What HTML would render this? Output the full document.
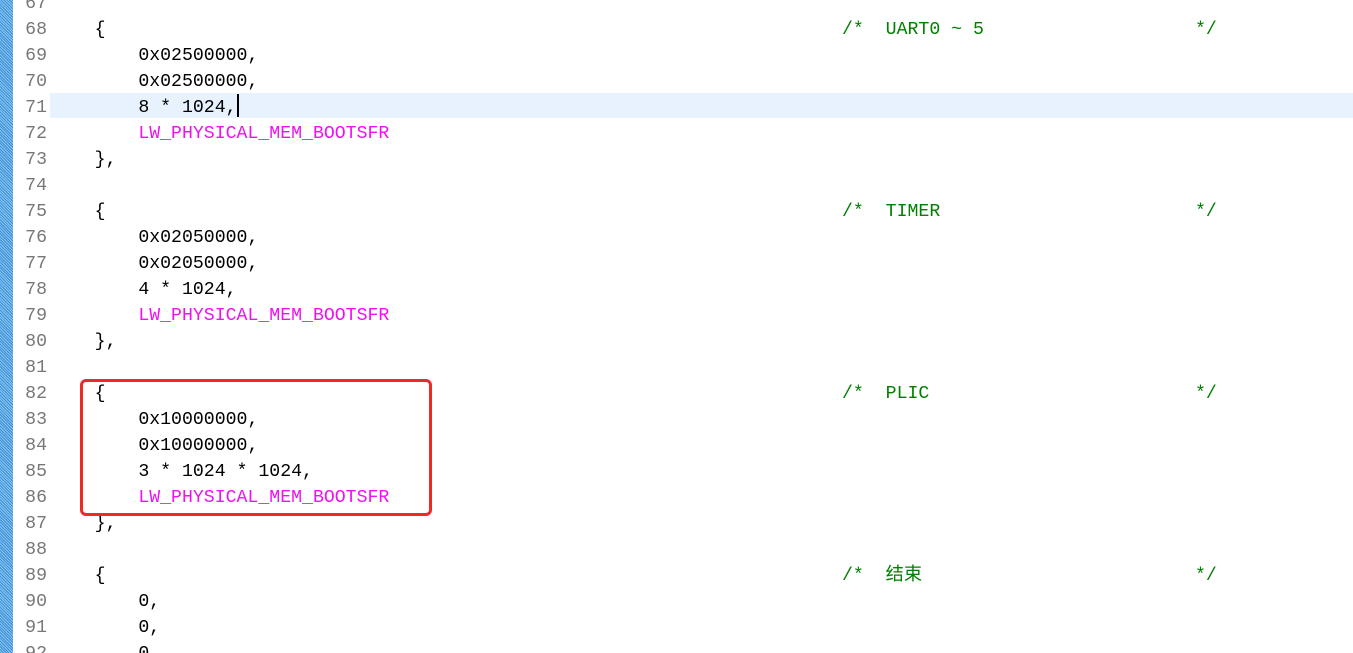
<!DOCTYPE html>
<html><head><meta charset="utf-8"><style>
html,body{margin:0;width:1353px;height:653px;overflow:hidden;}
body{background:#fff;position:relative;font-family:"Liberation Mono","Noto Sans CJK SC",monospace;font-size:18.2px;}
.bar{position:absolute;left:0;top:0;width:13px;height:653px;background:repeating-linear-gradient(45deg,#3a8fd8 0 1px,#8cc4f0 1px 2px);}
.hl{position:absolute;left:50px;top:93px;width:1303px;height:25px;background:#e8f2fe;}
.wrap{position:absolute;left:0;top:2px;width:1353px;height:653px;}
.ln{position:absolute;left:0;width:47px;text-align:right;color:#787878;height:26px;line-height:26px;}
.c{position:absolute;left:51px;white-space:pre;height:26px;line-height:26px;color:#000;}
.cm{position:absolute;white-space:pre;color:#008000;height:26px;line-height:26px;}
.m{color:#f010f0;}
.box{position:absolute;left:80px;top:379px;width:346px;height:131px;border:3px solid #f02a22;border-radius:6px;}
.cur{position:absolute;left:237px;top:94px;width:2px;height:23px;background:#000;}
</style></head><body>
<div class="bar"></div>
<div class="hl"></div>
<div class="wrap">
<div class="ln" style="top:-11px">67</div><div class="ln" style="top:15px">68</div><div class="ln" style="top:41px">69</div><div class="ln" style="top:67px">70</div><div class="ln" style="top:93px">71</div><div class="ln" style="top:119px">72</div><div class="ln" style="top:145px">73</div><div class="ln" style="top:171px">74</div><div class="ln" style="top:197px">75</div><div class="ln" style="top:223px">76</div><div class="ln" style="top:249px">77</div><div class="ln" style="top:275px">78</div><div class="ln" style="top:301px">79</div><div class="ln" style="top:327px">80</div><div class="ln" style="top:353px">81</div><div class="ln" style="top:379px">82</div><div class="ln" style="top:405px">83</div><div class="ln" style="top:431px">84</div><div class="ln" style="top:457px">85</div><div class="ln" style="top:483px">86</div><div class="ln" style="top:509px">87</div><div class="ln" style="top:535px">88</div><div class="ln" style="top:561px">89</div><div class="ln" style="top:587px">90</div><div class="ln" style="top:613px">91</div><div class="ln" style="top:639px">92</div>

<div class="c" style="top:15px">    {</div>
<div class="c" style="top:41px">        0x02500000,</div>
<div class="c" style="top:67px">        0x02500000,</div>
<div class="c" style="top:93px">        8 * 1024,</div>
<div class="c m" style="top:119px">        LW_PHYSICAL_MEM_BOOTSFR</div>
<div class="c" style="top:145px">    },</div>
<div class="c" style="top:197px">    {</div>
<div class="c" style="top:223px">        0x02050000,</div>
<div class="c" style="top:249px">        0x02050000,</div>
<div class="c" style="top:275px">        4 * 1024,</div>
<div class="c m" style="top:301px">        LW_PHYSICAL_MEM_BOOTSFR</div>
<div class="c" style="top:327px">    },</div>
<div class="c" style="top:379px">    {</div>
<div class="c" style="top:405px">        0x10000000,</div>
<div class="c" style="top:431px">        0x10000000,</div>
<div class="c" style="top:457px">        3 * 1024 * 1024,</div>
<div class="c m" style="top:483px">        LW_PHYSICAL_MEM_BOOTSFR</div>
<div class="c" style="top:509px">    },</div>
<div class="c" style="top:561px">    {</div>
<div class="c" style="top:587px">        0,</div>
<div class="c" style="top:613px">        0,</div>
<div class="c" style="top:639px">        0,</div>

<div class="cm" style="left:842px;top:15px">/*  UART0 ~ 5</div><div class="cm" style="left:1195px;top:15px">*/</div>
<div class="cm" style="left:842px;top:197px">/*  TIMER</div><div class="cm" style="left:1195px;top:197px">*/</div>
<div class="cm" style="left:842px;top:379px">/*  PLIC</div><div class="cm" style="left:1195px;top:379px">*/</div>
<div class="cm" style="left:842px;top:561px">/*  结束</div><div class="cm" style="left:1195px;top:561px">*/</div>
</div>
<div class="cur"></div>
<div class="box"></div>
</body></html>
